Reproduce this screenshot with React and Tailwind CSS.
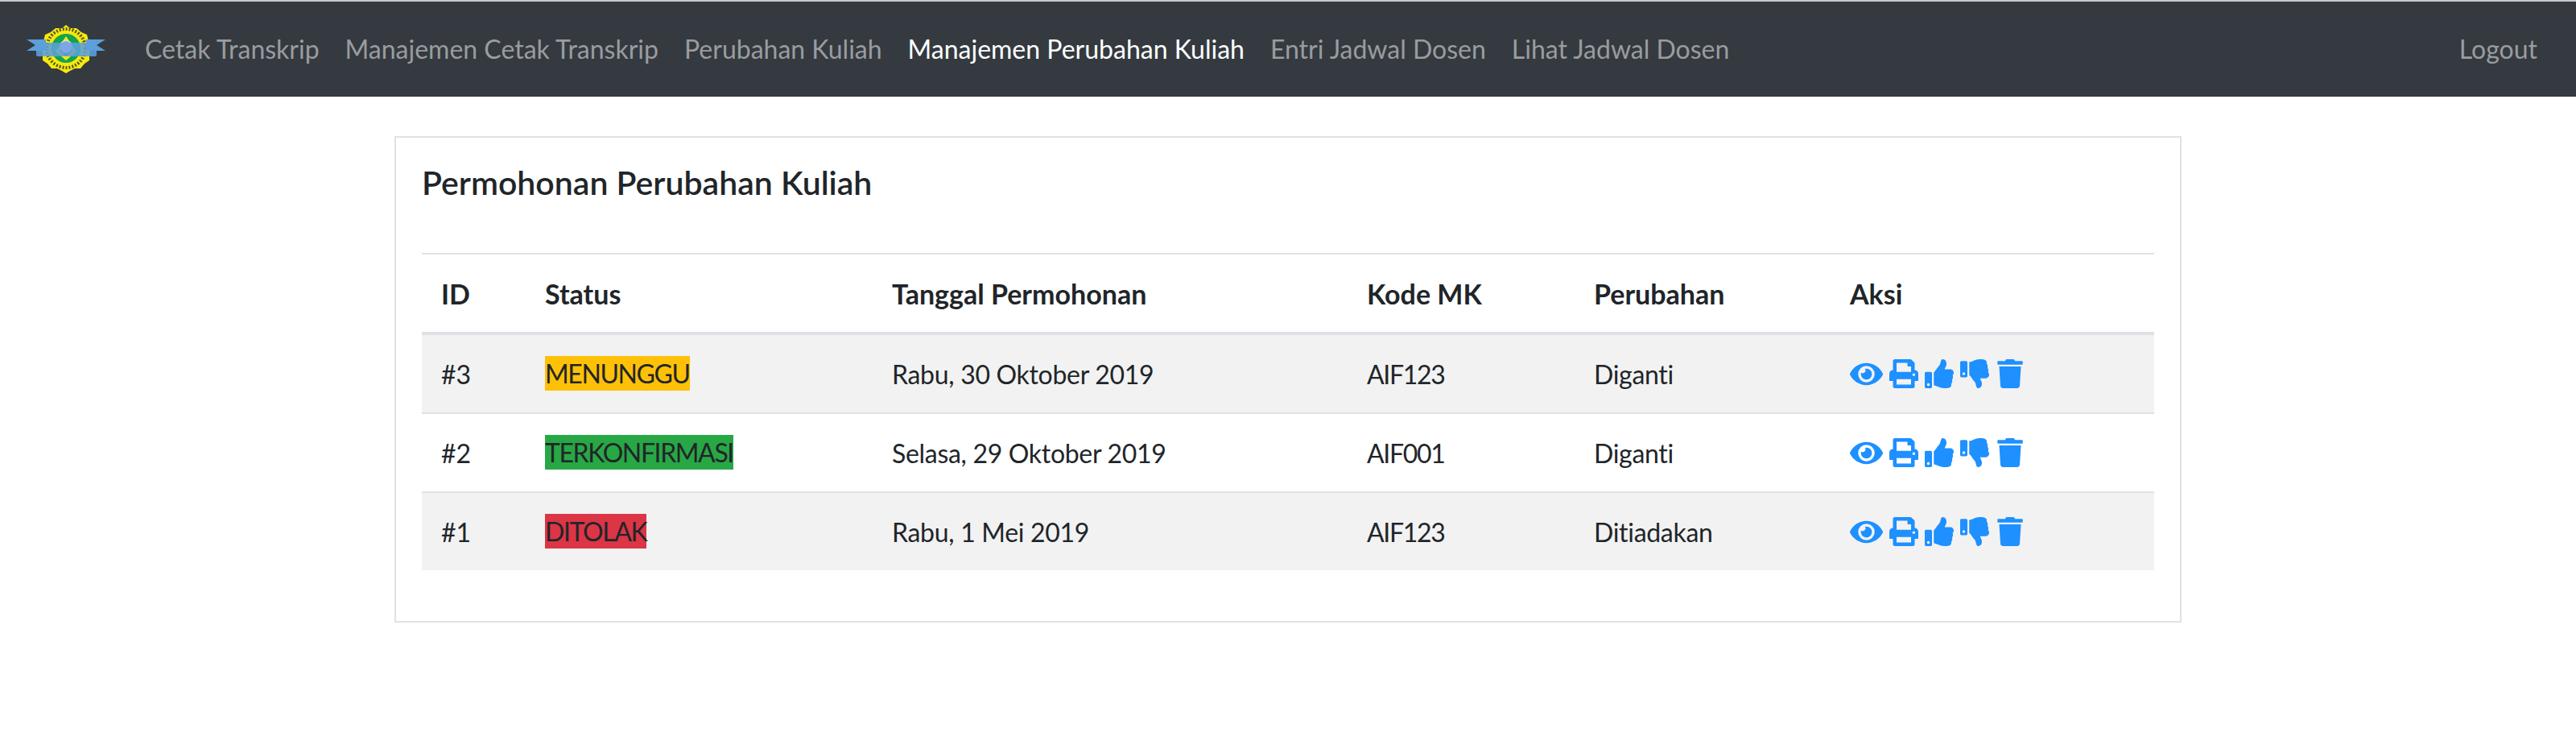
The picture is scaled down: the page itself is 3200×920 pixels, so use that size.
import { FaEye, FaPrint, FaThumbsUp, FaThumbsDown, FaTrash } from "react-icons/fa";

const links = [
  { label: "Cetak Transkrip" },
  { label: "Manajemen Cetak Transkrip" },
  { label: "Perubahan Kuliah" },
  { label: "Manajemen Perubahan Kuliah", active: true },
  { label: "Entri Jadwal Dosen" },
  { label: "Lihat Jadwal Dosen" },
];

const rows = [
  { id: "#3", status: "MENUNGGU", color: "bg-[#ffc107]", date: "Rabu, 30 Oktober 2019", kode: "AIF123", ubah: "Diganti" },
  { id: "#2", status: "TERKONFIRMASI", color: "bg-[#28a745]", date: "Selasa, 29 Oktober 2019", kode: "AIF001", ubah: "Diganti" },
  { id: "#1", status: "DITOLAK", color: "bg-[#dc3545]", date: "Rabu, 1 Mei 2019", kode: "AIF123", ubah: "Ditiadakan" },
];

const Logo = () => (
  <svg width="98" height="60" viewBox="0 0 98 60" className="block">
    <polygon
      points="49,0 54,4 62,4 68,9 75,12 77,20 80,28 78,36 78,44 72,48 67,54 60,54 54,57 49,60 44,57 38,54 31,54 26,48 20,44 20,36 18,28 21,20 23,12 30,9 36,4 44,4"
      fill="#f6e90f"
    />
    <circle cx="49" cy="29" r="24" fill="none" stroke="#55551f" strokeWidth="4" strokeDasharray="2 2" />
    <circle cx="49" cy="29" r="18" fill="#14a24f" />
    <polygon points="49,14 62,33 49,44 36,33" fill="#f6e90f" />
    <polygon points="49,19 57,32 49,39 41,32" fill="#2f6d46" />
    <polygon points="0,32 11,25 0,18 24,18 24,32" fill="#5c9fdb" />
    <polygon points="98,32 87,25 98,18 74,18 74,32" fill="#5c9fdb" />
    <circle cx="49" cy="27" r="8" fill="#e8e8e8" />
    <rect x="12" y="22" width="75" height="17" rx="2" fill="#5c9fdb" opacity="0.88" />
    <circle cx="49" cy="27" r="7" fill="#7ea6e4" />
  </svg>
);

export default function App() {
  return (
    <div className="min-h-screen bg-white font-['Lato','Liberation_Sans',sans-serif] text-[32px] leading-[48px] text-[#212529] [font-variant-ligatures:none]">
      <nav className="flex h-[120px] items-center border-t-2 border-[#c8c9cb] bg-[#343a40] pl-[33px] pr-[32px]">
        <Logo />
        <div className="ml-[33px] flex flex-1 items-center">
          {links.map((link) => (
            <a
              key={link.label}
              className={`px-4 ${link.active ? "text-white" : "text-[#9a9c9f]"}`}
            >
              {link.label}
            </a>
          ))}
        </div>
        <a className="px-4 text-[#9a9c9f]">Logout</a>
      </nav>

      <div className="mx-auto mt-[49px] h-[604px] w-[2220px] border-2 border-[#dee2e6] p-[32px]">
        <h5 className="text-[41px] font-semibold leading-[48px]">Permohonan Perubahan Kuliah</h5>
        <table className="mt-[63px] w-full table-fixed border-collapse">
          <thead>
            <tr className="border-t-2 border-b-4 border-[#dee2e6] text-left text-[34px]">
              <th className="w-[129px] px-[24px] pt-[25px] pb-[23px] font-bold">ID</th>
              <th className="w-[431px] px-[24px] pt-[25px] pb-[23px] font-bold">Status</th>
              <th className="w-[590px] px-[24px] pt-[25px] pb-[23px] font-bold">Tanggal Permohonan</th>
              <th className="w-[282px] px-[24px] pt-[25px] pb-[23px] font-bold">Kode MK</th>
              <th className="w-[318px] px-[24px] pt-[25px] pb-[23px] font-bold">Perubahan</th>
              <th className="px-[24px] pt-[25px] pb-[23px] font-bold">Aksi</th>
            </tr>
          </thead>
          <tbody>
            {rows.map((row, i) => (
              <tr
                key={row.id}
                className={`${i % 2 === 0 ? "bg-[#f2f2f2]" : ""} ${i > 0 ? "border-t-2 border-[#dee2e6]" : ""}`}
              >
                <td className="px-[24px] pt-[25px] pb-[23px]">{row.id}</td>
                <td className="p-[24px]">
                  <span className={`inline-block ${row.color} pt-[1px] leading-[42px] tracking-[-1.4px]`}>{row.status}</span>
                </td>
                <td className="px-[24px] pt-[25px] pb-[23px] tracking-[-0.3px]">{row.date}</td>
                <td className="px-[24px] pt-[25px] pb-[23px] tracking-[-1.3px]">{row.kode}</td>
                <td className="px-[24px] pt-[25px] pb-[23px] tracking-[-0.3px]">{row.ubah}</td>
                <td className="p-[24px]">
                  <div className="flex items-center gap-[8px] text-[#1e90ff]">
                    <FaEye size={41} />
                    <FaPrint size={36} />
                    <FaThumbsUp size={36} />
                    <FaThumbsDown size={36} />
                    <FaTrash size={36} />
                  </div>
                </td>
              </tr>
            ))}
          </tbody>
        </table>
      </div>
    </div>
  );
}
